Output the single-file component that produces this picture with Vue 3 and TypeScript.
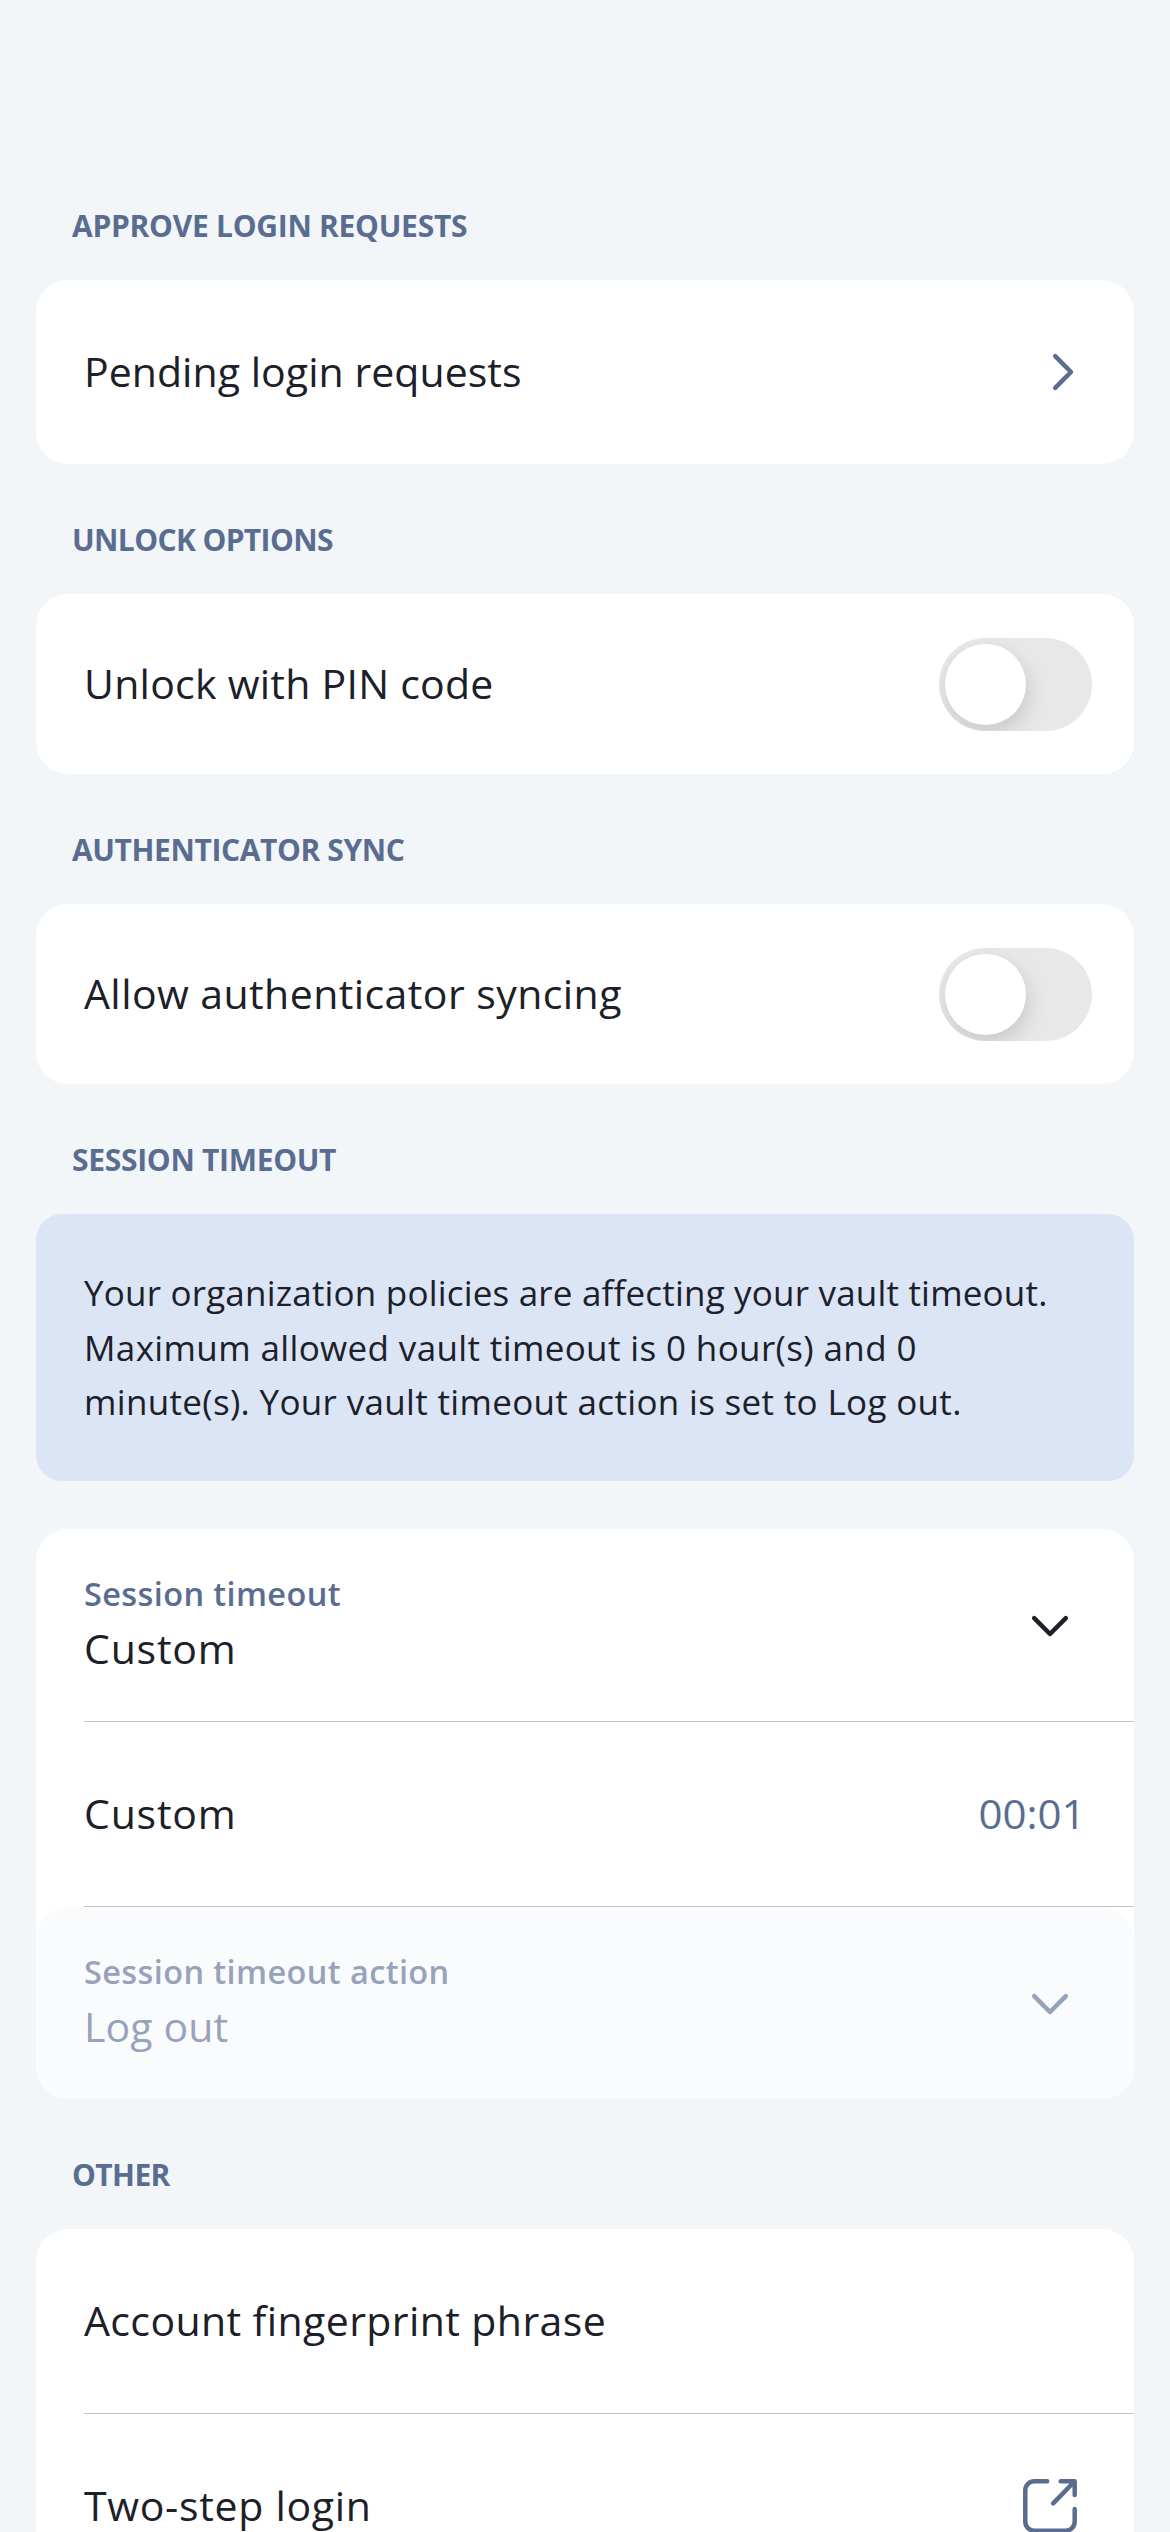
<script setup lang="ts">
interface Text {
  text: string
  spacing: number
}

const t = (text: string, spacing = 0): Text => ({ text, spacing })
const track = (item: Text) => ({ letterSpacing: `${item.spacing}px` })

const heads = {
  approve: t('APPROVE LOGIN REQUESTS', -0.27),
  unlock: t('UNLOCK OPTIONS', -0.62),
  sync: t('AUTHENTICATOR SYNC', -0.4),
  session: t('SESSION TIMEOUT', -0.3),
  other: t('OTHER', -0.6),
}

const toggles = [
  { head: heads.unlock, label: t('Unlock with PIN code', 0.26) },
  { head: heads.sync, label: t('Allow authenticator syncing', 0.43) },
]

const policy = [
  t('Your organization policies are affecting your vault timeout.', 0.19),
  t('Maximum allowed vault timeout is 0 hour(s) and 0', 0.37),
  t('minute(s). Your vault timeout action is set to Log out.', 0.33),
]

const labels = {
  pending: t('Pending login requests', 0.05),
  timeout: t('Session timeout', 0.38),
  custom: t('Custom', 0.8),
  action: t('Session timeout action', 0.39),
  logout: t('Log out', 0.1),
  phrase: t('Account fingerprint phrase', 0.4),
  twoStep: t('Two-step login', 0.7),
}
</script>

<template>
  <main class="page">
    <h2 class="head"><span :style="track(heads.approve)">{{ heads.approve.text }}</span></h2>
    <section class="card">
      <div class="row">
        <span class="label" :style="track(labels.pending)">{{ labels.pending.text }}</span>
        <svg class="chevron-right" viewBox="0 0 24 40"><path d="M4.2 4.2 20 20 4.2 35.8" /></svg>
      </div>
    </section>

    <template v-for="item in toggles" :key="item.label.text">
      <h2 class="head"><span :style="track(item.head)">{{ item.head.text }}</span></h2>
      <section class="card">
        <div class="row row-toggle">
          <span class="label" :style="track(item.label)">{{ item.label.text }}</span>
          <span class="toggle"><span class="knob"></span></span>
        </div>
      </section>
    </template>

    <h2 class="head"><span :style="track(heads.session)">{{ heads.session.text }}</span></h2>
    <p class="policy">
      <span v-for="line in policy" :key="line.text" :style="track(line)">{{ line.text }}</span>
    </p>

    <section class="card">
      <div class="menu">
        <div class="menu-text">
          <span class="caption" :style="track(labels.timeout)">{{ labels.timeout.text }}</span>
          <span class="label" :style="track(labels.custom)">{{ labels.custom.text }}</span>
        </div>
        <svg class="chevron-down" viewBox="0 0 40 24"><path d="M4.2 4.2 20 20 35.8 4.2" /></svg>
      </div>
      <div class="divider"></div>
      <div class="row">
        <span class="label" :style="track(labels.custom)">{{ labels.custom.text }}</span>
        <span class="value">00:01</span>
      </div>
      <div class="divider"></div>
      <div class="menu disabled">
        <div class="menu-text">
          <span class="caption" :style="track(labels.action)">{{ labels.action.text }}</span>
          <span class="label" :style="track(labels.logout)">{{ labels.logout.text }}</span>
        </div>
        <svg class="chevron-down" viewBox="0 0 40 24"><path d="M4.2 4.2 20 20 35.8 4.2" /></svg>
      </div>
    </section>

    <h2 class="head"><span :style="track(heads.other)">{{ heads.other.text }}</span></h2>
    <section class="card">
      <div class="row">
        <span class="label" :style="track(labels.phrase)">{{ labels.phrase.text }}</span>
      </div>
      <div class="divider"></div>
      <div class="row">
        <span class="label" :style="track(labels.twoStep)">{{ labels.twoStep.text }}</span>
        <svg class="external" viewBox="0 0 54 54">
          <path d="M24.2 2.3H11.3a9 9 0 0 0-9 9v31.4a9 9 0 0 0 9 9h31.4a9 9 0 0 0 9-9V30" />
          <path d="M37.7 2.3h14v13.6M51.2 2.8 30.2 24.4" />
        </svg>
      </div>
    </section>
  </main>
</template>

<style>
body {
  background: #f2f6f9;
}
</style>

<style scoped>
.page {
  box-sizing: border-box;
  height: 2532px;
  padding: 150px 36px 0;
  overflow: hidden;
  background: #f2f6f9;
  color: #1b2029;
  font-family: "Open Sans", "Noto Sans", sans-serif;
}

.head {
  box-sizing: border-box;
  height: 130px;
  margin: 0;
  padding: 56px 36px 0;
  color: #5a6d91;
  font-size: 30px;
  font-weight: 700;
  line-height: 40px;
  white-space: nowrap;
}

.card {
  overflow: hidden;
  border-radius: 32px;
  background: #fff;
}

.row {
  display: flex;
  box-sizing: border-box;
  align-items: center;
  justify-content: space-between;
  height: 184px;
  padding: 0 48px;
}

.row-toggle {
  height: 180px;
  padding-right: 42px;
}

.label {
  font-size: 41px;
  line-height: 58px;
  white-space: nowrap;
}

.row .label,
.value {
  margin-bottom: 2px;
}

.value {
  transform: scaleX(1.025);
  transform-origin: right center;
  color: #5a6d91;
  font-size: 41px;
  line-height: 58px;
}

.toggle {
  box-sizing: border-box;
  width: 153px;
  height: 93px;
  padding: 6px;
  overflow: hidden;
  border-radius: 47px;
  background: #e8e8e8;
}

.knob {
  display: block;
  width: 81px;
  height: 81px;
  border-radius: 50%;
  background: #fff;
  box-shadow: 2px 8px 20px rgba(0, 0, 0, 0.14);
}

.policy {
  display: flex;
  flex-direction: column;
  box-sizing: border-box;
  height: 267px;
  margin: 0 0 48px;
  padding: 52px 48px 0;
  border-radius: 26px;
  background: #dbe5f6;
  font-size: 35px;
  line-height: 54.6px;
  white-space: nowrap;
}

.menu {
  display: flex;
  box-sizing: border-box;
  align-items: center;
  justify-content: space-between;
  height: 192px;
  padding: 0 64px 0 48px;
}

.menu-text {
  display: flex;
  flex-direction: column;
  gap: 1px;
  margin-bottom: 3px;
}

.caption {
  color: #5a6d91;
  font-size: 32.5px;
  font-weight: 600;
  line-height: 48px;
  white-space: nowrap;
}

.disabled {
  border-radius: 32px;
  background: #fafbfd;
  color: #96a3bb;
}

.disabled .caption {
  color: #96a3bb;
}

.divider {
  height: 1px;
  margin-left: 48px;
  background: #c3c4c8;
}

svg {
  flex: none;
  fill: none;
  stroke: #5a6d91;
  stroke-width: 4.5;
  stroke-linecap: round;
  stroke-linejoin: round;
}

.chevron-right {
  width: 24px;
  height: 40px;
  margin-right: 11px;
}

.chevron-down {
  width: 40px;
  height: 24px;
  margin-top: 2px;
  stroke: #1b2029;
}

.disabled .chevron-down {
  stroke: #96a3bb;
}

.external {
  width: 54px;
  height: 54px;
  margin-right: 9px;
}
</style>
